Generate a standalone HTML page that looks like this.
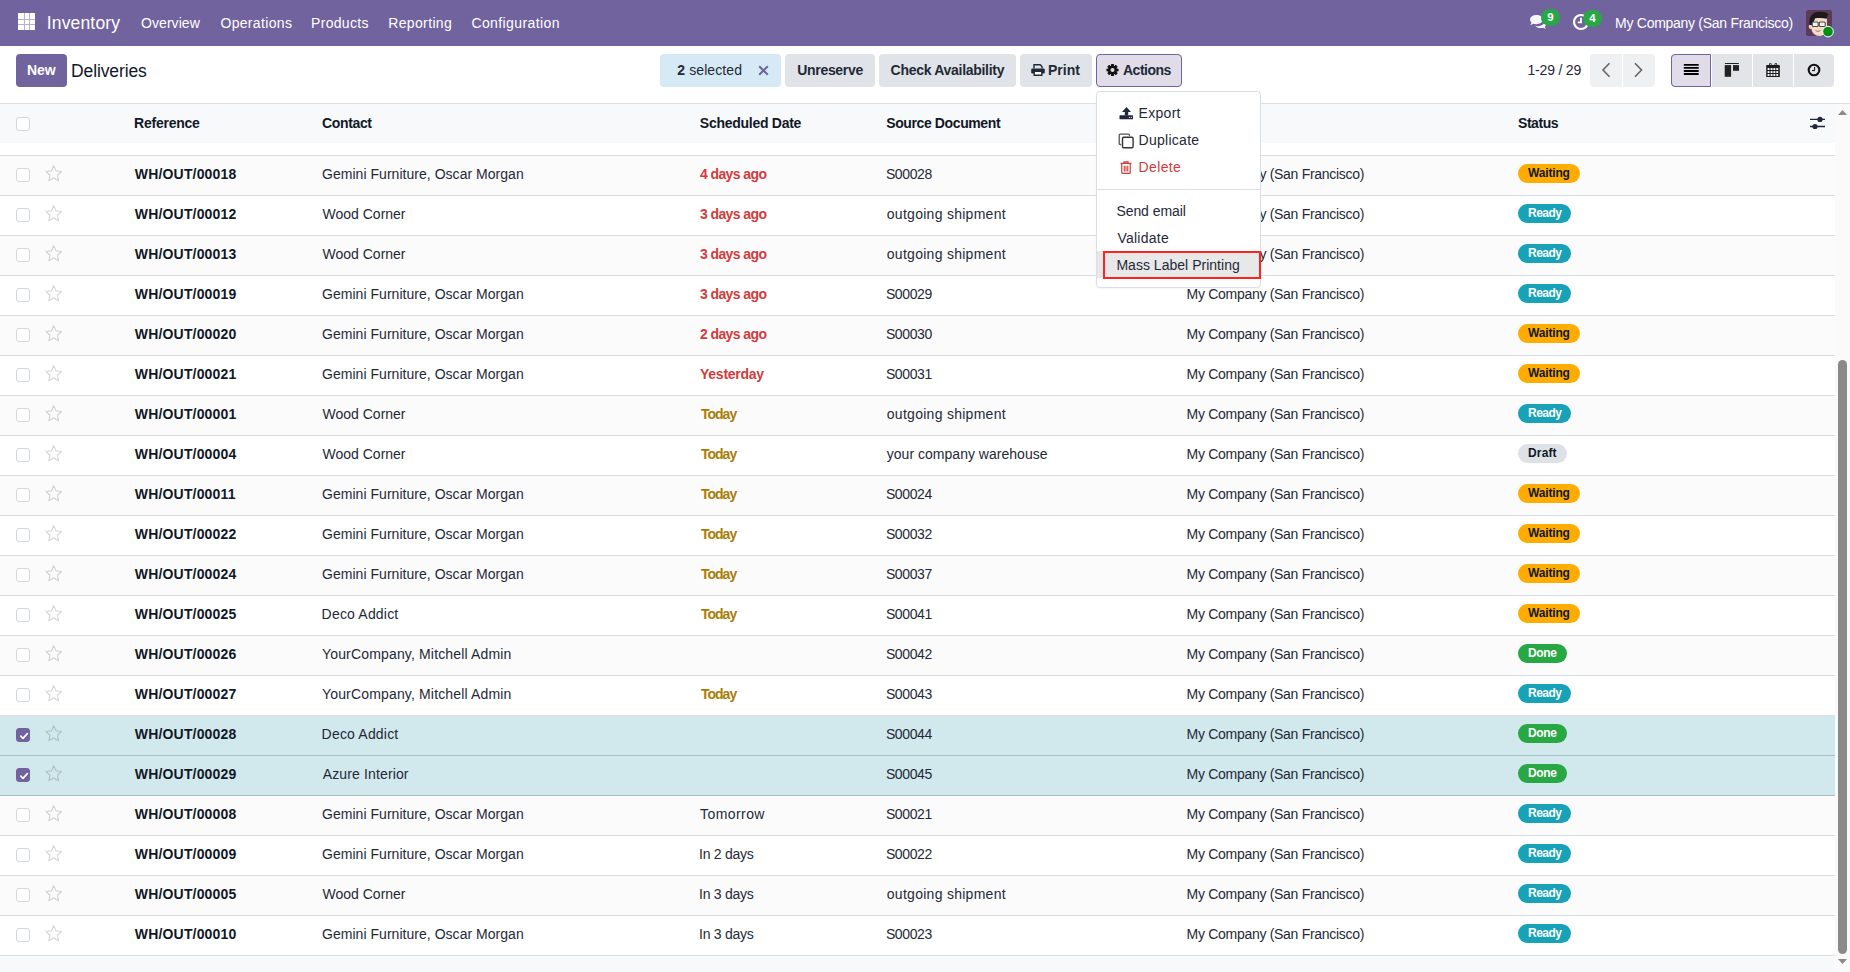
<!DOCTYPE html>
<html><head><meta charset="utf-8">
<style>
*{box-sizing:border-box;margin:0;padding:0}
html,body{width:1850px;height:972px;overflow:hidden;background:#fff}
body{font-family:"Liberation Sans",sans-serif;font-size:14px;color:#1f2937;position:relative}
.abs{position:absolute}
svg.abs{z-index:5}
.dd{z-index:10}
.nav{position:absolute;left:0;top:0;width:1850px;height:46px;background:#71639e;color:#fff}
.nav .t{position:absolute;top:0;line-height:46px;white-space:nowrap;color:#fff}
.apps{position:absolute;left:18px;top:13px;width:17px;height:17px}
.apps i{position:absolute;width:5px;height:5px;background:#fff}
.btn{position:absolute;top:54px;height:33px;border-radius:4px;line-height:33px;white-space:nowrap;font-weight:bold;color:#1f2937}
.btn2{background:#e0e3e7}
.hdrline{position:absolute;left:0;top:103px;width:1850px;height:1px;background:#dadfe4}
.thead{position:absolute;left:0;top:104px;width:1835px;height:39px;background:#f8f9fa}
.th{position:absolute;top:0;line-height:39px;font-weight:bold;color:#111827;white-space:nowrap}
.row{position:absolute;left:0;width:1835px;height:40px;border-top:1px solid #dadfe4;background:#fff}
.row.odd{background:#fbfbfc}
.row.sel{background:#d1e8ed}
.row.dk{border-top-color:#a8bdc3}
.row .c{position:absolute;top:-1px;line-height:39px;white-space:nowrap}
.row .ref{font-weight:bold;color:#111827}
.cb{position:absolute;left:16px;top:12px;width:14px;height:14px;border:1px solid #d3d6db;border-radius:3px;background:#fff}
.cb.on{background:#71639e;border-color:#71639e}
.star{position:absolute;left:44.5px;top:8.5px}
.dr{color:#d23c3c;font-weight:bold}
.dy{color:#a97c06;font-weight:bold}
.badge{position:absolute;left:1518px;top:8px;height:19px;line-height:19px;border-radius:10px;font-size:12px;font-weight:bold;padding:0 0 0 10px;white-space:nowrap}
.bw{width:62px}.bi{width:53px}.bs{width:49px}.bd{width:49px}
.bw{background:#ffac00;color:#111827}
.bi{background:#17a2b8;color:#fff}
.bs{background:#28a745;color:#fff}
.bd{background:#dee2e6;color:#111827}
.tfoot{position:absolute;left:0;top:955px;width:1835px;height:17px;border-top:1px solid #dadfe4;background:#f8f9fa}
.sb{position:absolute;left:1835px;top:104px;width:15px;height:868px;background:#fafafa}
.thumb{position:absolute;left:1838px;top:360px;width:9px;height:594px;border-radius:5px;background:#8a8a8a}
.dd{position:absolute;left:1096px;top:91px;width:165px;height:197px;background:#fff;border:1px solid #dadfe4;border-radius:4px;box-shadow:0 1px 2px rgba(0,0,0,.04)}
.dd .it{position:absolute;white-space:nowrap;line-height:20px}
</style></head>
<body>
<div class="nav">
  <div class="apps" style="background:#fff"><i style="left:0;top:5.5px;width:17px;height:.5px;background:#b9b1d0"></i><i style="left:0;top:11px;width:17px;height:.5px;background:#b9b1d0"></i><i style="left:5.5px;top:0;width:.5px;height:17px;background:#b9b1d0"></i><i style="left:11px;top:0;width:.5px;height:17px;background:#b9b1d0"></i></div>
  <div class="t" style="left:47px;font-size:17.5px"><span id="inventory" style="letter-spacing:0.150px;position:relative;left:-0.20px;">Inventory</span></div>
  <div class="t" style="left:141px"><span id="overview" style="letter-spacing:0.071px;">Overview</span></div>
  <div class="t" style="left:221px"><span id="operations" style="letter-spacing:0.333px;position:relative;left:-0.60px;">Operations</span></div>
  <div class="t" style="left:312px"><span id="products" style="letter-spacing:0.314px;position:relative;left:-1.00px;">Products</span></div>
  <div class="t" style="left:388px"><span id="reporting" style="letter-spacing:0.362px;position:relative;left:0.20px;">Reporting</span></div>
  <div class="t" style="left:472px"><span id="configuration" style="letter-spacing:0.400px;position:relative;left:-0.60px;">Configuration</span></div>
  <div class="t" style="left:1616px"><span id="navcompany" style="letter-spacing:-0.284px;position:relative;left:-0.90px;">My Company (San Francisco)</span></div>
  <svg class="abs" style="left:1526px;top:12px" width="22" height="20" viewBox="0 0 22 20">
    <path d="M10.5 12.2c3.6 0 6.5-2 6.5-4.6S14.1 3 10.5 3 4 5 4 7.6c0 1.1.5 2.1 1.5 2.9L4.3 13.2l3-1.5c1 .3 2 .5 3.2.5z" fill="#fff" opacity=".95"/>
    <path d="M9 13.5c1 1.6 3.3 2.6 5.6 2.6.9 0 1.8-.1 2.6-.4l2.6 1.3-1-2.3c.9-.7 1.4-1.6 1.4-2.6 0-1-.5-2-1.3-2.7-.6 3-3.9 4.8-7.6 4.8-.8 0-1.5-.3-2.3-.7z" fill="#fff" opacity=".95"/>
  </svg>
  <div class="abs" style="left:1541px;top:9px;width:19px;height:17px;border-radius:9px;background:#28a745;color:#fff;font-size:11.5px;font-weight:bold;line-height:17px;text-align:center;z-index:6">9</div>
  <svg class="abs" style="left:1572px;top:13px" width="18" height="18" viewBox="0 0 18 18">
    <circle cx="9" cy="9" r="7" fill="none" stroke="#fff" stroke-width="2.2"/>
    <path d="M9 4.8V9.4H5.8" fill="none" stroke="#fff" stroke-width="1.8"/>
  </svg>
  <div class="abs" style="left:1583px;top:10px;width:19px;height:17px;border-radius:9px;background:#28a745;color:#fff;font-size:11.5px;font-weight:bold;line-height:17px;text-align:center;z-index:6">4</div>
  <svg class="abs" style="left:1806px;top:10px" width="31" height="31" viewBox="0 0 31 31">
    <rect x="0" y="0" width="26" height="26" rx="2.5" fill="#5c3b56"/>
    <path d="M5.5 10c0-3 3-4.5 8-4.5s7.5 1.5 7.5 4.5v8.5c0 4.5-3.2 7.5-7.5 7.5S5.5 23 5.5 18.5z" fill="#f6dcc6"/>
    <ellipse cx="4.8" cy="16.5" rx="2" ry="2.6" fill="#f4d4bb"/>
    <path d="M3.5 15C2.5 7.5 6 2 13 1.8c5.5-.2 9 1.3 9.5 3.3-1.2.3-1.5 1.5-1.8 3.6-3-.8-7-1-11.5-.5-.8 1.8-1.8 4.2-2.6 6.8z" fill="#1c1a1b"/>
    <rect x="6.2" y="12" width="6" height="4.5" rx="1" fill="#f3efe9" stroke="#4a4a4a" stroke-width="1.1"/>
    <rect x="13.3" y="12" width="6" height="4.5" rx="1" fill="#f3efe9" stroke="#4a4a4a" stroke-width="1.1"/>
    <path d="M9.5 20.5c1.5 1 3.5 1 5 0" fill="none" stroke="#8a6a5a" stroke-width=".9"/>
    <circle cx="22" cy="21.6" r="5.3" fill="#008f12" stroke="#fff" stroke-width="1"/>
  </svg>

</div>

<div class="btn" style="left:16px;width:51px;background:#71639e;color:#fff;text-align:center"><span id="new" style="letter-spacing:-0.100px;position:relative;left:-0.20px;">New</span></div>
<div class="abs" style="left:72px;top:55px;line-height:33px;font-size:17.5px;color:#111827"><span id="deliveries" style="letter-spacing:-0.111px;position:relative;left:-1.00px;">Deliveries</span></div>

<div class="btn" style="left:660px;width:121px;background:#d6eaf5;font-weight:normal;padding-left:17px"><span id="selected" style="letter-spacing:0.089px;position:relative;left:0.30px;"><b>2</b> selected</span></div>
<div class="btn btn2" style="left:785px;width:90px;text-align:center"><span id="unreserve" style="letter-spacing:-0.312px;position:relative;left:0.10px;">Unreserve</span></div>
<div class="btn btn2" style="left:879px;width:137px;text-align:center"><span id="checkavail" style="letter-spacing:-0.288px;position:relative;left:-0.10px;">Check Availability</span></div>
<div class="btn btn2" style="left:1020px;width:72px;padding-left:28px"><span id="print">Print</span></div>
<div class="btn" style="left:1096px;width:86px;background:#e0dde9;border:1px solid #71639e;line-height:31px;padding-left:26px"><span id="actions" style="letter-spacing:-0.500px;">Actions</span></div>

<div class="abs" style="left:1527px;top:54px;line-height:33px;white-space:nowrap"><span id="pager" style="letter-spacing:-0.200px;position:relative;left:0.50px;">1-29 / 29</span></div>
<div class="abs" style="left:1590px;top:54px;width:65px;height:33px;background:#eef0f2;border-radius:4px"></div>
<div class="abs" style="left:1671px;top:54px;width:163px;height:33px;background:#e2e4e8;border-radius:4px"></div>
<div class="abs" style="left:1671px;top:54px;width:40px;height:33px;background:#e0dde9;border:1px solid #71639e;border-radius:4px 0 0 4px"></div>
<div class="abs" style="left:1622px;top:54px;width:1px;height:33px;background:#fff"></div>
<div class="abs" style="left:1711px;top:54px;width:1px;height:33px;background:#fff"></div>
<div class="abs" style="left:1752px;top:54px;width:1px;height:33px;background:#fff"></div>
<div class="abs" style="left:1793px;top:54px;width:1px;height:33px;background:#fff"></div>


<svg class="abs" style="left:758px;top:65px" width="11" height="11" viewBox="0 0 11 11"><path d="M1.2 1.2l8.6 8.6M9.8 1.2L1.2 9.8" stroke="#71639e" stroke-width="2"/></svg>
<svg class="abs" style="left:1031px;top:64px" width="14" height="12" viewBox="0 0 14 12">
  <path d="M3 4.5V0.8h6.2l1.8 1.8v1.9" fill="none" stroke="#1f2937" stroke-width="1.4"/>
  <rect x="0.2" y="4.6" width="13.6" height="4.8" rx="1.2" fill="#1f2937"/>
  <path d="M3.2 8v3.3h7.6V8" fill="#fff" stroke="#1f2937" stroke-width="1.4"/>
</svg>
<svg class="abs" style="left:1106px;top:64px" width="13" height="12" viewBox="0 0 13 12">
  <g transform="translate(6.5 6)">
  <path d="M4.12 -1.55 L6.05 -1.35 L6.05 1.35 L4.12 1.55 L4.01 1.82 L5.24 3.32 L3.32 5.24 L1.82 4.01 L1.55 4.12 L1.35 6.05 L-1.35 6.05 L-1.55 4.12 L-1.82 4.01 L-3.32 5.24 L-5.24 3.32 L-4.01 1.82 L-4.12 1.55 L-6.05 1.35 L-6.05 -1.35 L-4.12 -1.55 L-4.01 -1.82 L-5.24 -3.32 L-3.32 -5.24 L-1.82 -4.01 L-1.55 -4.12 L-1.35 -6.05 L1.35 -6.05 L1.55 -4.12 L1.82 -4.01 L3.32 -5.24 L5.24 -3.32 L4.01 -1.82 Z" fill="#111"/>
  <circle r="2" fill="#e0dde9"/>
  </g>
</svg>
<svg class="abs" style="left:1600px;top:62px" width="12" height="16" viewBox="0 0 12 16"><path d="M9.5 1.2L3 8l6.5 6.8" fill="none" stroke="#666" stroke-width="1.6"/></svg>
<svg class="abs" style="left:1632px;top:62px" width="12" height="16" viewBox="0 0 12 16"><path d="M3 1.2L9.5 8 3 14.8" fill="none" stroke="#666" stroke-width="1.6"/></svg>
<svg class="abs" style="left:1683px;top:63px" width="16" height="13" viewBox="0 0 16 13"><path d="M1.6 1.9h13.4M1.6 4.9h13.4M1.6 7.95h13.4M1.6 11h13.4" stroke="#000" stroke-width="1.85" stroke-linecap="round"/></svg>
<svg class="abs" style="left:1724px;top:63px" width="16" height="15" viewBox="0 0 16 15"><rect x="0.8" y="0" width="14.2" height="1.1" rx=".5" fill="#222"/><rect x="0.7" y="2.1" width="6.4" height="11.7" fill="#222"/><rect x="9" y="2.1" width="6" height="5.7" fill="#222"/></svg>
<svg class="abs" style="left:1766px;top:63px" width="14" height="14" viewBox="0 0 14 14"><rect x="0.2" y="2" width="13.6" height="12" rx=".6" fill="#1c1c1c"/><rect x="1.6" y="5.1" width="1.9" height="1.9" fill="#fff"/><rect x="4.6" y="5.1" width="1.9" height="1.9" fill="#fff"/><rect x="7.4" y="5.1" width="1.9" height="1.9" fill="#fff"/><rect x="10.3" y="5.1" width="1.9" height="1.9" fill="#fff"/><rect x="1.6" y="8.1" width="1.9" height="1.9" fill="#fff"/><rect x="4.6" y="8.1" width="1.9" height="1.9" fill="#fff"/><rect x="7.4" y="8.1" width="1.9" height="1.9" fill="#fff"/><rect x="10.3" y="8.1" width="1.9" height="1.9" fill="#fff"/><rect x="1.6" y="11.0" width="1.9" height="1.9" fill="#fff"/><rect x="4.6" y="11.0" width="1.9" height="1.9" fill="#fff"/><rect x="7.4" y="11.0" width="1.9" height="1.9" fill="#fff"/><rect x="10.3" y="11.0" width="1.9" height="1.9" fill="#fff"/><path d="M3.5 3.2V1.2a.9.9 0 0 1 1.8 0V3.2M8.9 3.2V1.2a.9.9 0 0 1 1.8 0V3.2" fill="none" stroke="#1c1c1c" stroke-width="1"/></svg>
<svg class="abs" style="left:1807px;top:63px" width="14" height="14" viewBox="0 0 14 14"><circle cx="7" cy="7" r="5.3" fill="none" stroke="#111" stroke-width="2.1"/><path d="M7.6 3.9V7.6H5" fill="none" stroke="#111" stroke-width="1"/></svg>
<svg class="abs" style="left:1809px;top:116px" width="17" height="14" viewBox="0 0 17 14"><path d="M1 3.4h15M1 10.5h15" stroke="#1f2937" stroke-width="1.4"/><circle cx="11" cy="3.4" r="2.6" fill="#1f2937"/><circle cx="6" cy="10.5" r="2.6" fill="#1f2937"/></svg>
<svg class="abs" style="left:1837px;top:108px" width="11" height="8" viewBox="0 0 11 8"><path d="M1 7L5.5 2 10 7z" fill="#8a8a8a"/></svg>
<svg class="abs" style="left:1837px;top:958px" width="11" height="8" viewBox="0 0 11 8"><path d="M1 1L5.5 6 10 1z" fill="#8a8a8a"/></svg>
<div class="hdrline"></div>
<div class="thead">
  <div class="cb" style="top:13px"></div>
  <div class="th" style="left:134px"><span id="h_ref" style="letter-spacing:-0.237px;position:relative;left:0.10px;">Reference</span></div>
  <div class="th" style="left:322px"><span id="h_contact" style="letter-spacing:-0.350px;">Contact</span></div>
  <div class="th" style="left:700px"><span id="h_date" style="letter-spacing:-0.269px;position:relative;left:-0.20px;">Scheduled Date</span></div>
  <div class="th" style="left:886px"><span id="h_src" style="letter-spacing:-0.386px;position:relative;left:0.20px;">Source Document</span></div>
  <div class="th" style="left:1187px">Company</div>
  <div class="th" style="left:1518px"><span id="h_status" style="letter-spacing:-0.440px;">Status</span></div>
</div>

<div class="row odd" style="top:155px"><div class="cb"></div><svg class="star" width="18" height="18" viewBox="0 0 18 18"><path d="M8.75 0.80 L11.04 5.84 L16.55 6.47 L12.46 10.21 L13.57 15.63 L8.75 12.90 L3.93 15.63 L5.04 10.21 L0.95 6.47 L6.46 5.84Z" fill="none" stroke="#000" stroke-opacity=".16" stroke-width="1.15" stroke-linejoin="round"/></svg><div class="c ref" style="left:134px"><span style="letter-spacing:0.173px;position:relative;left:0.80px;">WH/OUT/00018</span></div><div class="c" style="left:322px"><span style="letter-spacing:0.034px;">Gemini Furniture, Oscar Morgan</span></div><div class="c" style="left:700px"><span class="dr"><span style="letter-spacing:-0.600px;">4 days ago</span></span></div><div class="c" style="left:886px"><span style="letter-spacing:-0.380px;position:relative;left:-0.10px;">S00028</span></div><div class="c" style="left:1187px"><span style="letter-spacing:-0.298px;position:relative;left:-0.40px;">My Company (San Francisco)</span></div><div class="badge bw"><span style="letter-spacing:-0.167px;">Waiting</span></div></div>
<div class="row" style="top:195px"><div class="cb"></div><svg class="star" width="18" height="18" viewBox="0 0 18 18"><path d="M8.75 0.80 L11.04 5.84 L16.55 6.47 L12.46 10.21 L13.57 15.63 L8.75 12.90 L3.93 15.63 L5.04 10.21 L0.95 6.47 L6.46 5.84Z" fill="none" stroke="#000" stroke-opacity=".16" stroke-width="1.15" stroke-linejoin="round"/></svg><div class="c ref" style="left:134px"><span style="letter-spacing:0.173px;position:relative;left:0.80px;">WH/OUT/00012</span></div><div class="c" style="left:322px"><span style="letter-spacing:-0.010px;position:relative;left:0.60px;">Wood Corner</span></div><div class="c" style="left:700px"><span class="dr"><span style="letter-spacing:-0.600px;">3 days ago</span></span></div><div class="c" style="left:886px"><span style="letter-spacing:0.275px;position:relative;left:0.80px;">outgoing shipment</span></div><div class="c" style="left:1187px"><span style="letter-spacing:-0.298px;position:relative;left:-0.40px;">My Company (San Francisco)</span></div><div class="badge bi"><span style="letter-spacing:-0.500px;">Ready</span></div></div>
<div class="row odd" style="top:235px"><div class="cb"></div><svg class="star" width="18" height="18" viewBox="0 0 18 18"><path d="M8.75 0.80 L11.04 5.84 L16.55 6.47 L12.46 10.21 L13.57 15.63 L8.75 12.90 L3.93 15.63 L5.04 10.21 L0.95 6.47 L6.46 5.84Z" fill="none" stroke="#000" stroke-opacity=".16" stroke-width="1.15" stroke-linejoin="round"/></svg><div class="c ref" style="left:134px"><span style="letter-spacing:0.173px;position:relative;left:0.80px;">WH/OUT/00013</span></div><div class="c" style="left:322px"><span style="letter-spacing:-0.010px;position:relative;left:0.60px;">Wood Corner</span></div><div class="c" style="left:700px"><span class="dr"><span style="letter-spacing:-0.600px;">3 days ago</span></span></div><div class="c" style="left:886px"><span style="letter-spacing:0.275px;position:relative;left:0.80px;">outgoing shipment</span></div><div class="c" style="left:1187px"><span style="letter-spacing:-0.298px;position:relative;left:-0.40px;">My Company (San Francisco)</span></div><div class="badge bi"><span style="letter-spacing:-0.500px;">Ready</span></div></div>
<div class="row" style="top:275px"><div class="cb"></div><svg class="star" width="18" height="18" viewBox="0 0 18 18"><path d="M8.75 0.80 L11.04 5.84 L16.55 6.47 L12.46 10.21 L13.57 15.63 L8.75 12.90 L3.93 15.63 L5.04 10.21 L0.95 6.47 L6.46 5.84Z" fill="none" stroke="#000" stroke-opacity=".16" stroke-width="1.15" stroke-linejoin="round"/></svg><div class="c ref" style="left:134px"><span style="letter-spacing:0.173px;position:relative;left:0.80px;">WH/OUT/00019</span></div><div class="c" style="left:322px"><span style="letter-spacing:0.034px;">Gemini Furniture, Oscar Morgan</span></div><div class="c" style="left:700px"><span class="dr"><span style="letter-spacing:-0.600px;">3 days ago</span></span></div><div class="c" style="left:886px"><span style="letter-spacing:-0.380px;position:relative;left:-0.10px;">S00029</span></div><div class="c" style="left:1187px"><span style="letter-spacing:-0.298px;position:relative;left:-0.40px;">My Company (San Francisco)</span></div><div class="badge bi"><span style="letter-spacing:-0.500px;">Ready</span></div></div>
<div class="row odd" style="top:315px"><div class="cb"></div><svg class="star" width="18" height="18" viewBox="0 0 18 18"><path d="M8.75 0.80 L11.04 5.84 L16.55 6.47 L12.46 10.21 L13.57 15.63 L8.75 12.90 L3.93 15.63 L5.04 10.21 L0.95 6.47 L6.46 5.84Z" fill="none" stroke="#000" stroke-opacity=".16" stroke-width="1.15" stroke-linejoin="round"/></svg><div class="c ref" style="left:134px"><span id="ref" style="letter-spacing:0.173px;position:relative;left:0.80px;">WH/OUT/00020</span></div><div class="c" style="left:322px"><span id="c_GeminiFurnitureOscarMorgan" style="letter-spacing:0.034px;">Gemini Furniture, Oscar Morgan</span></div><div class="c" style="left:700px"><span class="dr"><span id="d_daysago" style="letter-spacing:-0.600px;">2 days ago</span></span></div><div class="c" style="left:886px"><span id="src_S" style="letter-spacing:-0.380px;position:relative;left:-0.10px;">S00030</span></div><div class="c" style="left:1187px"><span id="company" style="letter-spacing:-0.298px;position:relative;left:-0.40px;">My Company (San Francisco)</span></div><div class="badge bw"><span id="b_Waiting" style="letter-spacing:-0.167px;">Waiting</span></div></div>
<div class="row" style="top:355px"><div class="cb"></div><svg class="star" width="18" height="18" viewBox="0 0 18 18"><path d="M8.75 0.80 L11.04 5.84 L16.55 6.47 L12.46 10.21 L13.57 15.63 L8.75 12.90 L3.93 15.63 L5.04 10.21 L0.95 6.47 L6.46 5.84Z" fill="none" stroke="#000" stroke-opacity=".16" stroke-width="1.15" stroke-linejoin="round"/></svg><div class="c ref" style="left:134px"><span style="letter-spacing:0.173px;position:relative;left:0.80px;">WH/OUT/00021</span></div><div class="c" style="left:322px"><span style="letter-spacing:0.034px;">Gemini Furniture, Oscar Morgan</span></div><div class="c" style="left:700px"><span class="dr"><span id="d_Yesterday" style="letter-spacing:-0.250px;">Yesterday</span></span></div><div class="c" style="left:886px"><span style="letter-spacing:-0.380px;position:relative;left:-0.10px;">S00031</span></div><div class="c" style="left:1187px"><span style="letter-spacing:-0.298px;position:relative;left:-0.40px;">My Company (San Francisco)</span></div><div class="badge bw"><span style="letter-spacing:-0.167px;">Waiting</span></div></div>
<div class="row odd" style="top:395px"><div class="cb"></div><svg class="star" width="18" height="18" viewBox="0 0 18 18"><path d="M8.75 0.80 L11.04 5.84 L16.55 6.47 L12.46 10.21 L13.57 15.63 L8.75 12.90 L3.93 15.63 L5.04 10.21 L0.95 6.47 L6.46 5.84Z" fill="none" stroke="#000" stroke-opacity=".16" stroke-width="1.15" stroke-linejoin="round"/></svg><div class="c ref" style="left:134px"><span style="letter-spacing:0.173px;position:relative;left:0.80px;">WH/OUT/00001</span></div><div class="c" style="left:322px"><span id="c_WoodCorner" style="letter-spacing:-0.010px;position:relative;left:0.60px;">Wood Corner</span></div><div class="c" style="left:700px"><span class="dy"><span id="d_Today" style="letter-spacing:-1.000px;position:relative;left:1.00px;">Today</span></span></div><div class="c" style="left:886px"><span id="src_outgoingshipment" style="letter-spacing:0.275px;position:relative;left:0.80px;">outgoing shipment</span></div><div class="c" style="left:1187px"><span style="letter-spacing:-0.298px;position:relative;left:-0.40px;">My Company (San Francisco)</span></div><div class="badge bi"><span id="b_Ready" style="letter-spacing:-0.500px;">Ready</span></div></div>
<div class="row" style="top:435px"><div class="cb"></div><svg class="star" width="18" height="18" viewBox="0 0 18 18"><path d="M8.75 0.80 L11.04 5.84 L16.55 6.47 L12.46 10.21 L13.57 15.63 L8.75 12.90 L3.93 15.63 L5.04 10.21 L0.95 6.47 L6.46 5.84Z" fill="none" stroke="#000" stroke-opacity=".16" stroke-width="1.15" stroke-linejoin="round"/></svg><div class="c ref" style="left:134px"><span style="letter-spacing:0.173px;position:relative;left:0.80px;">WH/OUT/00004</span></div><div class="c" style="left:322px"><span style="letter-spacing:-0.010px;position:relative;left:0.60px;">Wood Corner</span></div><div class="c" style="left:700px"><span class="dy"><span style="letter-spacing:-1.000px;position:relative;left:1.00px;">Today</span></span></div><div class="c" style="left:886px"><span id="src_yourcompanywarehouse" style="letter-spacing:0.019px;position:relative;left:0.80px;">your company warehouse</span></div><div class="c" style="left:1187px"><span style="letter-spacing:-0.298px;position:relative;left:-0.40px;">My Company (San Francisco)</span></div><div class="badge bd"><span id="b_Draft" style="letter-spacing:0.150px;">Draft</span></div></div>
<div class="row odd" style="top:475px"><div class="cb"></div><svg class="star" width="18" height="18" viewBox="0 0 18 18"><path d="M8.75 0.80 L11.04 5.84 L16.55 6.47 L12.46 10.21 L13.57 15.63 L8.75 12.90 L3.93 15.63 L5.04 10.21 L0.95 6.47 L6.46 5.84Z" fill="none" stroke="#000" stroke-opacity=".16" stroke-width="1.15" stroke-linejoin="round"/></svg><div class="c ref" style="left:134px"><span style="letter-spacing:0.173px;position:relative;left:0.80px;">WH/OUT/00011</span></div><div class="c" style="left:322px"><span style="letter-spacing:0.034px;">Gemini Furniture, Oscar Morgan</span></div><div class="c" style="left:700px"><span class="dy"><span style="letter-spacing:-1.000px;position:relative;left:1.00px;">Today</span></span></div><div class="c" style="left:886px"><span style="letter-spacing:-0.380px;position:relative;left:-0.10px;">S00024</span></div><div class="c" style="left:1187px"><span style="letter-spacing:-0.298px;position:relative;left:-0.40px;">My Company (San Francisco)</span></div><div class="badge bw"><span style="letter-spacing:-0.167px;">Waiting</span></div></div>
<div class="row" style="top:515px"><div class="cb"></div><svg class="star" width="18" height="18" viewBox="0 0 18 18"><path d="M8.75 0.80 L11.04 5.84 L16.55 6.47 L12.46 10.21 L13.57 15.63 L8.75 12.90 L3.93 15.63 L5.04 10.21 L0.95 6.47 L6.46 5.84Z" fill="none" stroke="#000" stroke-opacity=".16" stroke-width="1.15" stroke-linejoin="round"/></svg><div class="c ref" style="left:134px"><span style="letter-spacing:0.173px;position:relative;left:0.80px;">WH/OUT/00022</span></div><div class="c" style="left:322px"><span style="letter-spacing:0.034px;">Gemini Furniture, Oscar Morgan</span></div><div class="c" style="left:700px"><span class="dy"><span style="letter-spacing:-1.000px;position:relative;left:1.00px;">Today</span></span></div><div class="c" style="left:886px"><span style="letter-spacing:-0.380px;position:relative;left:-0.10px;">S00032</span></div><div class="c" style="left:1187px"><span style="letter-spacing:-0.298px;position:relative;left:-0.40px;">My Company (San Francisco)</span></div><div class="badge bw"><span style="letter-spacing:-0.167px;">Waiting</span></div></div>
<div class="row odd" style="top:555px"><div class="cb"></div><svg class="star" width="18" height="18" viewBox="0 0 18 18"><path d="M8.75 0.80 L11.04 5.84 L16.55 6.47 L12.46 10.21 L13.57 15.63 L8.75 12.90 L3.93 15.63 L5.04 10.21 L0.95 6.47 L6.46 5.84Z" fill="none" stroke="#000" stroke-opacity=".16" stroke-width="1.15" stroke-linejoin="round"/></svg><div class="c ref" style="left:134px"><span style="letter-spacing:0.173px;position:relative;left:0.80px;">WH/OUT/00024</span></div><div class="c" style="left:322px"><span style="letter-spacing:0.034px;">Gemini Furniture, Oscar Morgan</span></div><div class="c" style="left:700px"><span class="dy"><span style="letter-spacing:-1.000px;position:relative;left:1.00px;">Today</span></span></div><div class="c" style="left:886px"><span style="letter-spacing:-0.380px;position:relative;left:-0.10px;">S00037</span></div><div class="c" style="left:1187px"><span style="letter-spacing:-0.298px;position:relative;left:-0.40px;">My Company (San Francisco)</span></div><div class="badge bw"><span style="letter-spacing:-0.167px;">Waiting</span></div></div>
<div class="row" style="top:595px"><div class="cb"></div><svg class="star" width="18" height="18" viewBox="0 0 18 18"><path d="M8.75 0.80 L11.04 5.84 L16.55 6.47 L12.46 10.21 L13.57 15.63 L8.75 12.90 L3.93 15.63 L5.04 10.21 L0.95 6.47 L6.46 5.84Z" fill="none" stroke="#000" stroke-opacity=".16" stroke-width="1.15" stroke-linejoin="round"/></svg><div class="c ref" style="left:134px"><span style="letter-spacing:0.173px;position:relative;left:0.80px;">WH/OUT/00025</span></div><div class="c" style="left:322px"><span id="c_DecoAddict" style="letter-spacing:0.190px;position:relative;left:-0.40px;">Deco Addict</span></div><div class="c" style="left:700px"><span class="dy"><span style="letter-spacing:-1.000px;position:relative;left:1.00px;">Today</span></span></div><div class="c" style="left:886px"><span style="letter-spacing:-0.380px;position:relative;left:-0.10px;">S00041</span></div><div class="c" style="left:1187px"><span style="letter-spacing:-0.298px;position:relative;left:-0.40px;">My Company (San Francisco)</span></div><div class="badge bw"><span style="letter-spacing:-0.167px;">Waiting</span></div></div>
<div class="row odd" style="top:635px"><div class="cb"></div><svg class="star" width="18" height="18" viewBox="0 0 18 18"><path d="M8.75 0.80 L11.04 5.84 L16.55 6.47 L12.46 10.21 L13.57 15.63 L8.75 12.90 L3.93 15.63 L5.04 10.21 L0.95 6.47 L6.46 5.84Z" fill="none" stroke="#000" stroke-opacity=".16" stroke-width="1.15" stroke-linejoin="round"/></svg><div class="c ref" style="left:134px"><span style="letter-spacing:0.173px;position:relative;left:0.80px;">WH/OUT/00026</span></div><div class="c" style="left:322px"><span id="c_YourCompanyMitchellAdmin" style="letter-spacing:0.162px;">YourCompany, Mitchell Admin</span></div><div class="c" style="left:700px"></div><div class="c" style="left:886px"><span style="letter-spacing:-0.380px;position:relative;left:-0.10px;">S00042</span></div><div class="c" style="left:1187px"><span style="letter-spacing:-0.298px;position:relative;left:-0.40px;">My Company (San Francisco)</span></div><div class="badge bs"><span id="b_Done" style="letter-spacing:-0.333px;">Done</span></div></div>
<div class="row" style="top:675px"><div class="cb"></div><svg class="star" width="18" height="18" viewBox="0 0 18 18"><path d="M8.75 0.80 L11.04 5.84 L16.55 6.47 L12.46 10.21 L13.57 15.63 L8.75 12.90 L3.93 15.63 L5.04 10.21 L0.95 6.47 L6.46 5.84Z" fill="none" stroke="#000" stroke-opacity=".16" stroke-width="1.15" stroke-linejoin="round"/></svg><div class="c ref" style="left:134px"><span style="letter-spacing:0.173px;position:relative;left:0.80px;">WH/OUT/00027</span></div><div class="c" style="left:322px"><span style="letter-spacing:0.162px;">YourCompany, Mitchell Admin</span></div><div class="c" style="left:700px"><span class="dy"><span style="letter-spacing:-1.000px;position:relative;left:1.00px;">Today</span></span></div><div class="c" style="left:886px"><span style="letter-spacing:-0.380px;position:relative;left:-0.10px;">S00043</span></div><div class="c" style="left:1187px"><span style="letter-spacing:-0.298px;position:relative;left:-0.40px;">My Company (San Francisco)</span></div><div class="badge bi"><span style="letter-spacing:-0.500px;">Ready</span></div></div>
<div class="row sel" style="top:715px"><div class="cb on"><svg width="10" height="10" viewBox="0 0 10 10" style="position:absolute;left:2px;top:2px"><path d="M1.8 5.2l2.2 2.1 4.3-4.6" fill="none" stroke="#fff" stroke-width="1.7" stroke-linecap="round" stroke-linejoin="round"/></svg></div><svg class="star" width="18" height="18" viewBox="0 0 18 18"><path d="M8.75 0.80 L11.04 5.84 L16.55 6.47 L12.46 10.21 L13.57 15.63 L8.75 12.90 L3.93 15.63 L5.04 10.21 L0.95 6.47 L6.46 5.84Z" fill="none" stroke="#000" stroke-opacity=".16" stroke-width="1.15" stroke-linejoin="round"/></svg><div class="c ref" style="left:134px"><span style="letter-spacing:0.173px;position:relative;left:0.80px;">WH/OUT/00028</span></div><div class="c" style="left:322px"><span style="letter-spacing:0.190px;position:relative;left:-0.40px;">Deco Addict</span></div><div class="c" style="left:700px"></div><div class="c" style="left:886px"><span style="letter-spacing:-0.380px;position:relative;left:-0.10px;">S00044</span></div><div class="c" style="left:1187px"><span style="letter-spacing:-0.298px;position:relative;left:-0.40px;">My Company (San Francisco)</span></div><div class="badge bs"><span style="letter-spacing:-0.333px;">Done</span></div></div>
<div class="row sel dk" style="top:755px"><div class="cb on"><svg width="10" height="10" viewBox="0 0 10 10" style="position:absolute;left:2px;top:2px"><path d="M1.8 5.2l2.2 2.1 4.3-4.6" fill="none" stroke="#fff" stroke-width="1.7" stroke-linecap="round" stroke-linejoin="round"/></svg></div><svg class="star" width="18" height="18" viewBox="0 0 18 18"><path d="M8.75 0.80 L11.04 5.84 L16.55 6.47 L12.46 10.21 L13.57 15.63 L8.75 12.90 L3.93 15.63 L5.04 10.21 L0.95 6.47 L6.46 5.84Z" fill="none" stroke="#000" stroke-opacity=".16" stroke-width="1.15" stroke-linejoin="round"/></svg><div class="c ref" style="left:134px"><span style="letter-spacing:0.173px;position:relative;left:0.80px;">WH/OUT/00029</span></div><div class="c" style="left:322px"><span id="c_AzureInterior" style="letter-spacing:0.138px;position:relative;left:0.70px;">Azure Interior</span></div><div class="c" style="left:700px"></div><div class="c" style="left:886px"><span style="letter-spacing:-0.380px;position:relative;left:-0.10px;">S00045</span></div><div class="c" style="left:1187px"><span style="letter-spacing:-0.298px;position:relative;left:-0.40px;">My Company (San Francisco)</span></div><div class="badge bs"><span style="letter-spacing:-0.333px;">Done</span></div></div>
<div class="row odd dk" style="top:795px"><div class="cb"></div><svg class="star" width="18" height="18" viewBox="0 0 18 18"><path d="M8.75 0.80 L11.04 5.84 L16.55 6.47 L12.46 10.21 L13.57 15.63 L8.75 12.90 L3.93 15.63 L5.04 10.21 L0.95 6.47 L6.46 5.84Z" fill="none" stroke="#000" stroke-opacity=".16" stroke-width="1.15" stroke-linejoin="round"/></svg><div class="c ref" style="left:134px"><span style="letter-spacing:0.173px;position:relative;left:0.80px;">WH/OUT/00008</span></div><div class="c" style="left:322px"><span style="letter-spacing:0.034px;">Gemini Furniture, Oscar Morgan</span></div><div class="c" style="left:700px"><span class="dn"><span id="d_Tomorrow" style="letter-spacing:0.429px;">Tomorrow</span></span></div><div class="c" style="left:886px"><span style="letter-spacing:-0.380px;position:relative;left:-0.10px;">S00021</span></div><div class="c" style="left:1187px"><span style="letter-spacing:-0.298px;position:relative;left:-0.40px;">My Company (San Francisco)</span></div><div class="badge bi"><span style="letter-spacing:-0.500px;">Ready</span></div></div>
<div class="row" style="top:835px"><div class="cb"></div><svg class="star" width="18" height="18" viewBox="0 0 18 18"><path d="M8.75 0.80 L11.04 5.84 L16.55 6.47 L12.46 10.21 L13.57 15.63 L8.75 12.90 L3.93 15.63 L5.04 10.21 L0.95 6.47 L6.46 5.84Z" fill="none" stroke="#000" stroke-opacity=".16" stroke-width="1.15" stroke-linejoin="round"/></svg><div class="c ref" style="left:134px"><span style="letter-spacing:0.173px;position:relative;left:0.80px;">WH/OUT/00009</span></div><div class="c" style="left:322px"><span style="letter-spacing:0.034px;">Gemini Furniture, Oscar Morgan</span></div><div class="c" style="left:700px"><span class="dn"><span id="d_In2days" style="letter-spacing:-0.250px;position:relative;left:-1.00px;">In 2 days</span></span></div><div class="c" style="left:886px"><span style="letter-spacing:-0.380px;position:relative;left:-0.10px;">S00022</span></div><div class="c" style="left:1187px"><span style="letter-spacing:-0.298px;position:relative;left:-0.40px;">My Company (San Francisco)</span></div><div class="badge bi"><span style="letter-spacing:-0.500px;">Ready</span></div></div>
<div class="row odd" style="top:875px"><div class="cb"></div><svg class="star" width="18" height="18" viewBox="0 0 18 18"><path d="M8.75 0.80 L11.04 5.84 L16.55 6.47 L12.46 10.21 L13.57 15.63 L8.75 12.90 L3.93 15.63 L5.04 10.21 L0.95 6.47 L6.46 5.84Z" fill="none" stroke="#000" stroke-opacity=".16" stroke-width="1.15" stroke-linejoin="round"/></svg><div class="c ref" style="left:134px"><span style="letter-spacing:0.173px;position:relative;left:0.80px;">WH/OUT/00005</span></div><div class="c" style="left:322px"><span style="letter-spacing:-0.010px;position:relative;left:0.60px;">Wood Corner</span></div><div class="c" style="left:700px"><span class="dn"><span id="d_In3days" style="letter-spacing:-0.250px;position:relative;left:-1.00px;">In 3 days</span></span></div><div class="c" style="left:886px"><span style="letter-spacing:0.275px;position:relative;left:0.80px;">outgoing shipment</span></div><div class="c" style="left:1187px"><span style="letter-spacing:-0.298px;position:relative;left:-0.40px;">My Company (San Francisco)</span></div><div class="badge bi"><span style="letter-spacing:-0.500px;">Ready</span></div></div>
<div class="row" style="top:915px"><div class="cb"></div><svg class="star" width="18" height="18" viewBox="0 0 18 18"><path d="M8.75 0.80 L11.04 5.84 L16.55 6.47 L12.46 10.21 L13.57 15.63 L8.75 12.90 L3.93 15.63 L5.04 10.21 L0.95 6.47 L6.46 5.84Z" fill="none" stroke="#000" stroke-opacity=".16" stroke-width="1.15" stroke-linejoin="round"/></svg><div class="c ref" style="left:134px"><span style="letter-spacing:0.173px;position:relative;left:0.80px;">WH/OUT/00010</span></div><div class="c" style="left:322px"><span style="letter-spacing:0.034px;">Gemini Furniture, Oscar Morgan</span></div><div class="c" style="left:700px"><span class="dn"><span style="letter-spacing:-0.250px;position:relative;left:-1.00px;">In 3 days</span></span></div><div class="c" style="left:886px"><span style="letter-spacing:-0.380px;position:relative;left:-0.10px;">S00023</span></div><div class="c" style="left:1187px"><span style="letter-spacing:-0.298px;position:relative;left:-0.40px;">My Company (San Francisco)</span></div><div class="badge bi"><span style="letter-spacing:-0.500px;">Ready</span></div></div>

<div class="tfoot"></div>
<div class="sb"></div>
<div class="thumb"></div>

<div class="dd">
  
  <svg class="abs" style="left:22px;top:15px" width="15" height="13" viewBox="0 0 15 13"><path d="M7.5 0L12 5H9.2v3.5H5.8V5H3z" fill="#1f2937"/><rect x="0.5" y="8.3" width="13.5" height="4" rx=".6" fill="#1f2937"/><circle cx="10.5" cy="10.3" r=".6" fill="#fff"/><circle cx="12.3" cy="10.3" r=".6" fill="#fff"/></svg>
  <svg class="abs" style="left:21px;top:41px" width="16" height="16" viewBox="0 0 16 16"><path d="M3.2 11.5H2.2a1 1 0 0 1-1-1V2.2a1 1 0 0 1 1-1h8.3a1 1 0 0 1 1 1v.8" fill="none" stroke="#555" stroke-width="1.3"/><rect x="4.5" y="4.2" width="10.6" height="10.6" rx="1.2" fill="#fff" stroke="#333" stroke-width="1.4"/></svg>
  <svg class="abs" style="left:22.5px;top:68.5px" width="12" height="13" viewBox="0 0 13 14"><path d="M0.6 2.5h11.8M4.3 2.3V1h4.4v1.3" fill="none" stroke="#d23c3c" stroke-width="1.3"/><path d="M1.9 3v9.6a.8.8 0 0 0 .8.8h7.6a.8.8 0 0 0 .8-.8V3" fill="none" stroke="#d23c3c" stroke-width="1.3"/><path d="M4.6 5.2v6M6.5 5.2v6M8.4 5.2v6" stroke="#d23c3c" stroke-width="1.2"/></svg>
<div class="it" style="left:42px;top:11px"><span id="export" style="letter-spacing:0.280px;position:relative;left:-0.40px;">Export</span></div>
  <div class="it" style="left:42px;top:38px"><span id="duplicate" style="letter-spacing:0.263px;position:relative;left:-0.40px;">Duplicate</span></div>
  <div class="it" style="left:42px;top:65px;color:#d23c3c"><span id="delete" style="letter-spacing:0.340px;position:relative;left:-0.40px;">Delete</span></div>
  <div class="abs" style="left:0;top:97px;width:163px;height:1px;background:#dadfe4"></div>
  <div class="it" style="left:20px;top:109px"><span id="sendemail" style="letter-spacing:-0.067px;position:relative;left:-0.60px;">Send email</span></div>
  <div class="it" style="left:20px;top:136px"><span id="validate" style="letter-spacing:0.257px;position:relative;left:0.40px;">Validate</span></div>
  <div class="abs" style="left:0;top:159px;width:163px;height:27px;background:#e8e8e9"></div>
  <div class="abs" style="left:6px;top:159px;width:158px;height:28px;border:2px solid #f22"></div>
  <div class="it" style="left:20px;top:163px"><span id="masslabel" style="letter-spacing:0.022px;position:relative;left:-0.60px;">Mass Label Printing</span></div>
</div>
</body></html>
